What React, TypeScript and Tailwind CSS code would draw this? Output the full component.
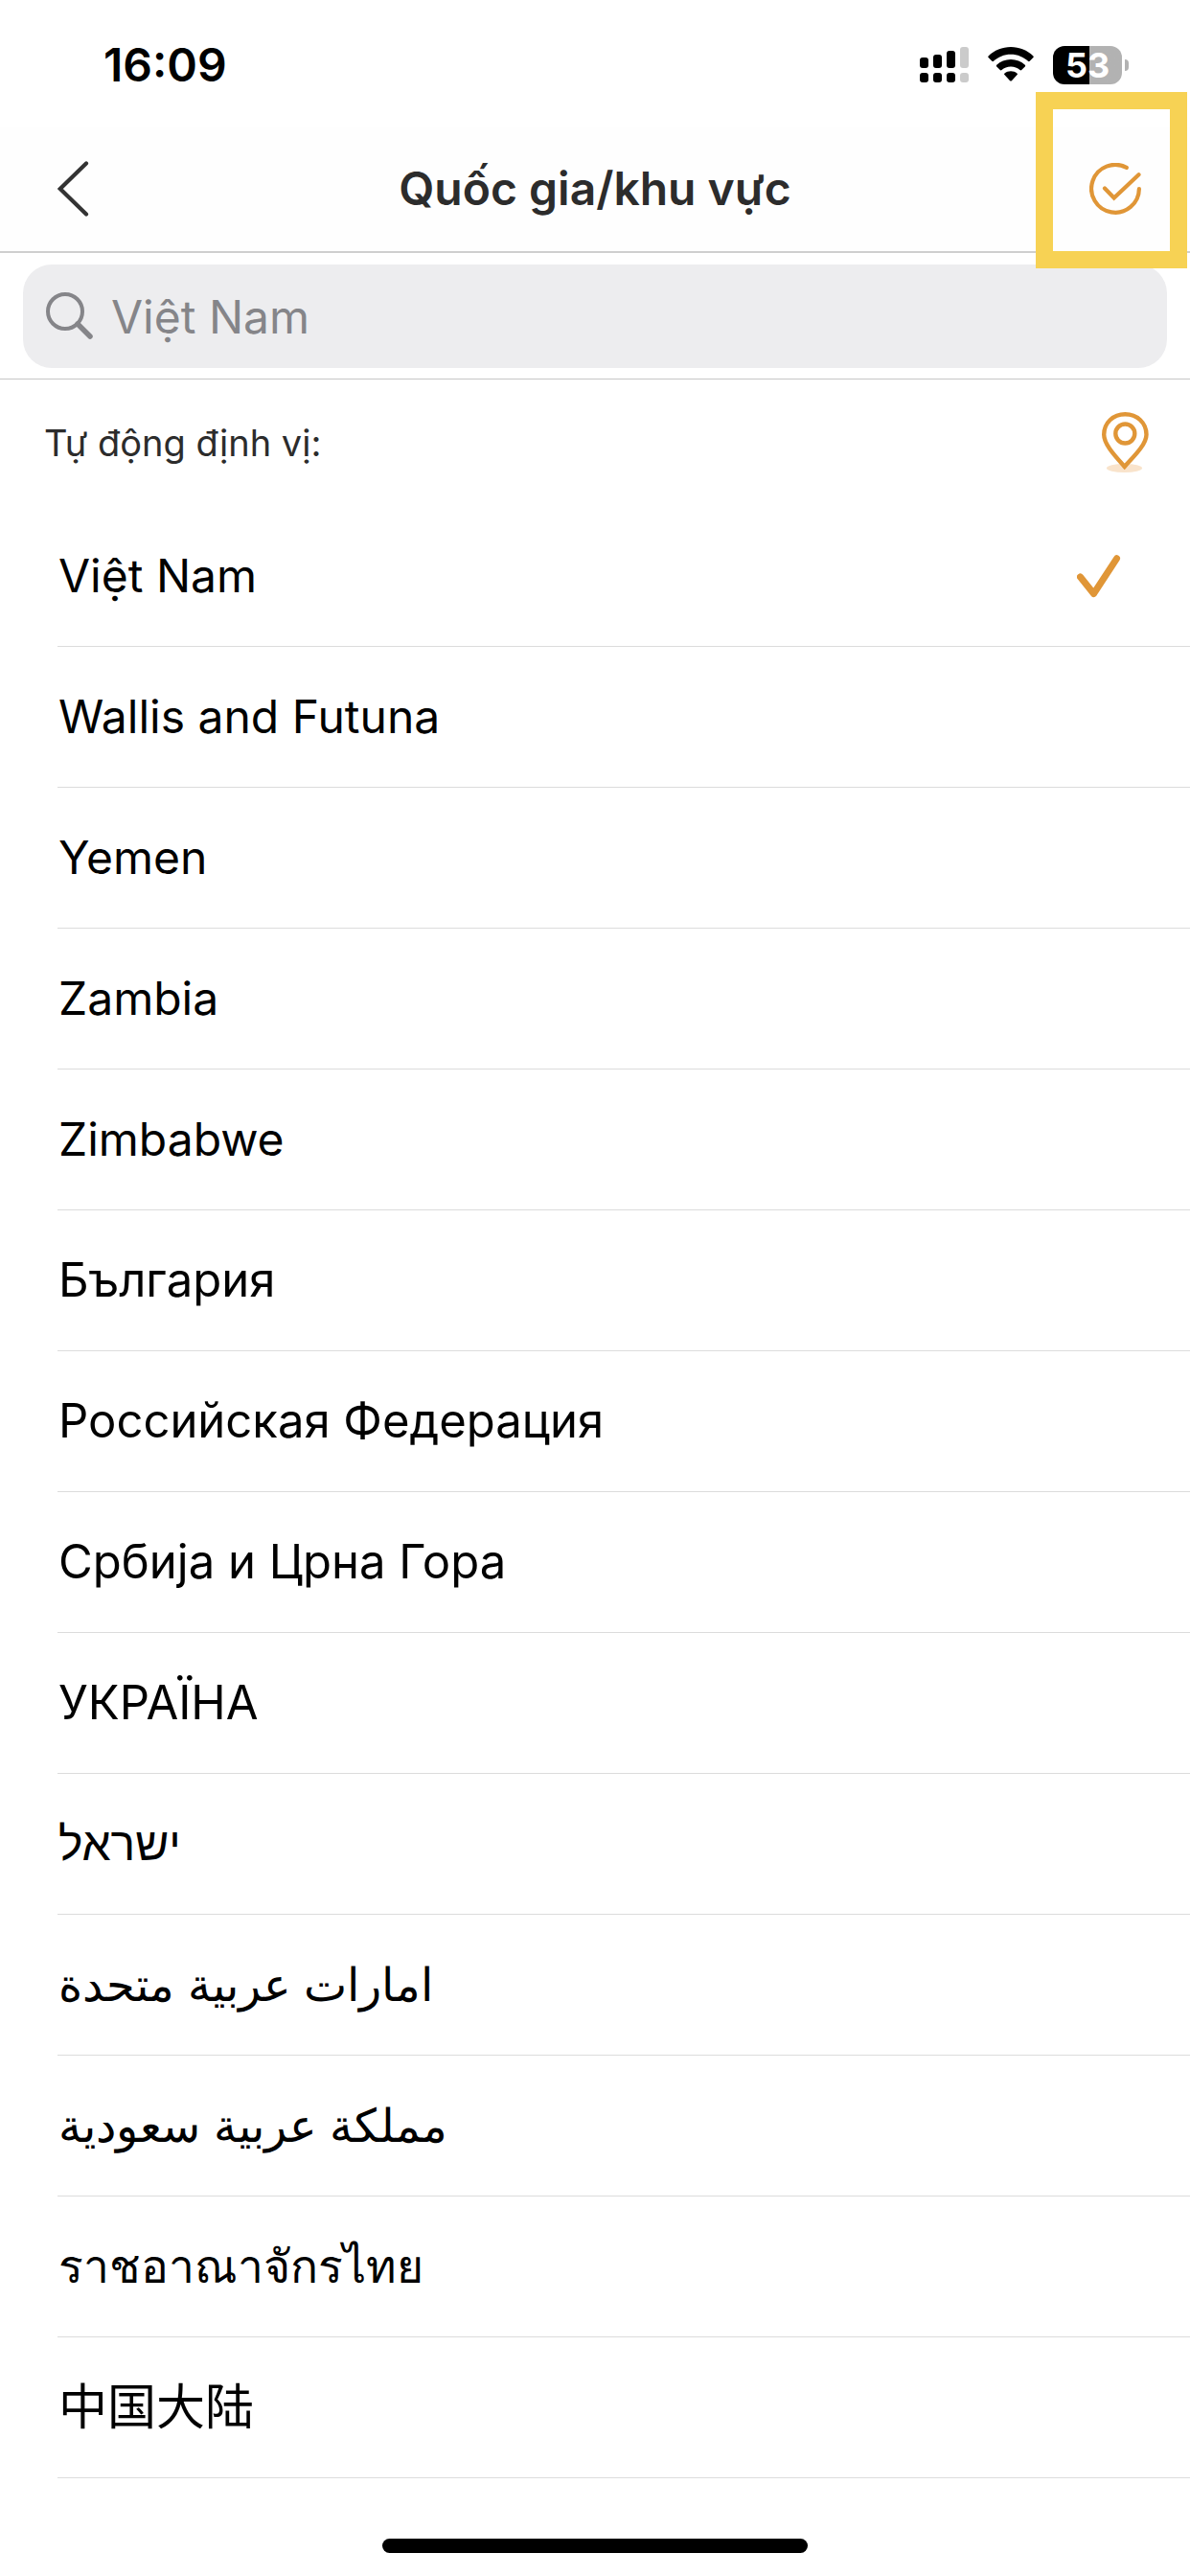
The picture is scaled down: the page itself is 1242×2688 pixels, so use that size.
import React, { useState } from 'react';

interface Country {
  id: string;
  name: string;
  lang?: string;
  /** Per-script type tweaks, so the alphabets look even in one list */
  className?: string;
}

const COUNTRIES: Country[] = [
  { id: 'vn', name: 'Việt Nam', lang: 'vi' },
  { id: 'wf', name: 'Wallis and Futuna' },
  { id: 'ye', name: 'Yemen' },
  { id: 'zm', name: 'Zambia' },
  { id: 'zw', name: 'Zimbabwe' },
  { id: 'bg', name: 'България', className: 'text-[49px]' },
  { id: 'ru', name: 'Российская Федерация', className: 'text-[49px]' },
  { id: 'cs', name: 'Србија и Црна Гора', className: 'text-[49px]' },
  { id: 'ua', name: 'УКРАЇНА', className: 'text-[49px]' },
  { id: 'il', name: 'ישראל', lang: 'he', className: 'text-5xl font-medium' },
  { id: 'ae', name: 'امارات عربية متحدة', lang: 'ar' },
  { id: 'sa', name: 'مملكة عربية سعودية', lang: 'ar' },
  { id: 'th', name: 'ราชอาณาจักรไทย', lang: 'th', className: 'text-5xl font-medium' },
  { id: 'cn', name: '中国大陆', lang: 'zh-CN', className: 'text-[51px]' },
];

const SignalIcon = () => (
  <svg width="51" height="38" viewBox="0 0 51 38" aria-hidden>
    <rect x="0" y="11" width="9" height="11" rx="3" />
    <rect x="14" y="8" width="9" height="14" rx="3" />
    <rect x="28" y="4" width="9" height="18" rx="3" />
    <rect x="42" y="0" width="9" height="22" rx="3" fill="#cbcbcb" />
    <rect x="0" y="27" width="9" height="10" rx="3" />
    <rect x="14" y="27" width="9" height="10" rx="3" />
    <rect x="28" y="27" width="9" height="10" rx="3" />
    <rect x="42" y="27" width="9" height="10" rx="3" fill="#cbcbcb" />
  </svg>
);

const WifiIcon = () => (
  <svg width="48" height="38" viewBox="0 0 48 38" aria-hidden>
    <path d="M24 0C33 0 41.300 3.500 47.400 9.400C47.900 9.900 47.900 10.600 47.400 11.100L43.700 14.800C43.200 15.300 42.500 15.300 42 14.800C37.300 10.400 31 7.700 24 7.700S10.700 10.400 6 14.800C5.500 15.300 4.800 15.300 4.300 14.800L.6 11.100C.1 10.600.1 9.900.6 9.400C6.700 3.500 15 0 24 0Z" />
    <path d="M24 13C29.700 13 34.900 15.200 38.800 18.800C39.300 19.300 39.300 20 38.800 20.500L35.200 24.100C34.700 24.600 34 24.600 33.500 24.100C31 21.900 27.700 20.600 24 20.600S17 21.900 14.500 24.100C14 24.600 13.300 24.600 12.800 24.100L9.200 20.500C8.700 20 8.700 19.300 9.200 18.800C13.100 15.200 18.300 13 24 13Z" />
    <path d="M24 25.200C26.500 25.200 28.700 26 30.500 27.400C31 27.900 31.100 28.600 30.600 29.100L24.900 35.200C24.400 35.700 23.600 35.700 23.100 35.200L17.400 29.100C16.900 28.600 17 27.900 17.500 27.400C19.300 26 21.500 25.200 24 25.200Z" />
  </svg>
);

const PinIcon = () => (
  <svg width="49" height="64" viewBox="0 0 49 64" fill="none" aria-hidden>
    <ellipse cx="23.500" cy="58.500" rx="18.500" ry="4.500" fill="#f9e3cb" />
    <path
      d="M23.700 57C16 48 2.200 34.500 2.200 23.500C2.200 11.200 11.800 2.200 24.300 2.200S46.500 11.200 46.500 23.500C46.500 34.500 31.500 48 23.700 57Z"
      fill="#fff"
      stroke="#e09637"
      strokeWidth="4.400"
    />
    <circle cx="24.300" cy="22.500" r="10" stroke="#e09637" strokeWidth="4.400" />
  </svg>
);

const StatusBar = () => (
  <div className="flex h-33 items-center justify-between pt-1 pr-16 pl-27 text-black">
    <span className="text-5xl font-semibold">16:09</span>
    <div className="flex items-center">
      <SignalIcon />
      <div className="ml-5">
        <WifiIcon />
      </div>
      <div className="ml-5 flex h-10 w-18 items-center justify-center rounded-xl bg-linear-to-r from-black from-53% to-[#b2b2b2] to-53%">
        <span className="text-4xl font-bold text-white">53</span>
      </div>
      <div className="ml-[3px] h-3 w-1 rounded-r-full bg-[#b2b2b2]" />
    </div>
  </div>
);

const NavBar = () => (
  <header className="flex h-33 items-center justify-between border-b-2 border-[#cfcfcf] bg-[#fefefe] px-12">
    <button type="button" aria-label="Quay lại" className="flex w-18 justify-start pl-3">
      <svg width="33" height="58" viewBox="0 0 33 58" fill="none" aria-hidden>
        <path d="M30 2.500L2.800 29L30 55.500" stroke="#333" strokeWidth="4.200" strokeLinecap="round" />
      </svg>
    </button>
    <h1 className="text-5xl font-semibold text-[#2c2c2c]">Quốc gia/khu vực</h1>
    <div className="relative flex w-18 justify-end">
      <button type="button" aria-label="Xác nhận" className="pr-[3px]">
        <svg width="54" height="54" viewBox="0 0 54 54" fill="none" stroke="#e09637" strokeWidth="4.200" strokeLinecap="round" aria-hidden>
          <path d="M38.800 4.900A24.900 24.900 0 1 0 51.900 27" />
          <path d="M16 26.500L25.700 36.500L51.500 12.300" />
        </svg>
      </button>
      {/* highlight frame drawn over the confirm action */}
      <div className="pointer-events-none absolute -top-[74px] -right-[45px] h-46 w-[158px] border-18 border-[#f7d254]" />
    </div>
  </header>
);

const App: React.FC = () => {
  const [selected, setSelected] = useState('vn');
  const [query, setQuery] = useState('');

  return (
    <div className="flex min-h-screen flex-col bg-white font-['Inter','Noto_Sans','Noto_Sans_CJK_SC',sans-serif]">
      <StatusBar />
      <NavBar />
      <div className="border-b border-[#c6c6c6] px-6 pt-3 pb-[11px]">
        <label className="flex h-27 items-center rounded-[30px] bg-[#ededef] pl-6">
          <svg width="50" height="50" viewBox="0 0 50 50" fill="none" stroke="#858589" strokeLinecap="round" aria-hidden>
            <circle cx="20" cy="20" r="18" strokeWidth="4" />
            <path d="M33 33L46 46" strokeWidth="5.500" />
          </svg>
          <input
            type="text"
            aria-label="Tìm quốc gia"
            placeholder="Việt Nam"
            value={query}
            onChange={(e) => setQuery(e.target.value)}
            className="ml-[18px] h-full min-w-0 flex-1 bg-transparent text-5xl text-black outline-none placeholder:text-[#858589]"
          />
        </label>
      </div>

      <div className="flex h-33 items-center justify-between pr-[43px] pl-[46px]">
        <span className="text-[38px] text-[#2c2c2c]">Tự động định vị:</span>
        <button type="button" aria-label="Định vị">
          <PinIcon />
        </button>
      </div>

      <ul className="pl-15">
        {COUNTRIES.map(({ id, name, lang, className = 'text-5xl' }) => (
          <li key={id} className="border-b border-[#dcdcdc]">
            <button
              type="button"
              lang={lang}
              onClick={() => setSelected(id)}
              className="flex h-[146px] w-full items-center justify-between pr-18 pl-px text-left text-black"
            >
              <span className={className}>{name}</span>
              {selected === id ? (
                <svg width="46" height="45" viewBox="0 0 46 45" fill="none" aria-hidden>
                  <path d="M3.500 23L17.500 40.500L41.500 3.800" stroke="#e09637" strokeWidth="7" strokeLinecap="round" strokeLinejoin="round" />
                </svg>
              ) : null}
            </button>
          </li>
        ))}
      </ul>

      <div className="mt-auto flex justify-center pb-6">
        <div className="h-[15px] w-111 rounded-full bg-black" />
      </div>
    </div>
  );
};

export default App;
